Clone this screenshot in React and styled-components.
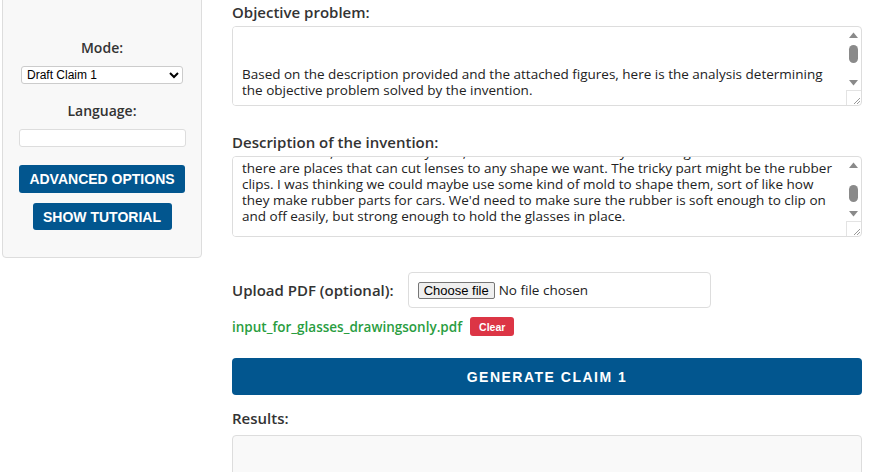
import React, { useEffect, useRef } from 'react';
import styled, { createGlobalStyle } from 'styled-components';

const GlobalStyle = createGlobalStyle`
  html, body {
    margin: 0;
    padding: 0;
    background: #fff;
    overflow: hidden;
  }
  body {
    font-family: 'Open Sans', 'Liberation Sans', sans-serif;
    color: #333;
  }
`;

const Page = styled.div`
  display: flex;
  align-items: flex-start;
  margin-top: -24px;
  padding-left: 2px;
`;

const Sidebar = styled.aside`
  width: 200px;
  box-sizing: border-box;
  background: #f8f8f8;
  border: 1px solid #ddd;
  border-radius: 4px;
  padding: 62px 16px 27px;
  display: flex;
  flex-direction: column;
  align-items: center;
`;

const SideLabel = styled.label`
  font-size: 14px;
  font-weight: 600;
  color: #333;
  line-height: 18px;
  margin-bottom: 9px;
`;

const ModeSelect = styled.select`
  width: 162px;
  height: 18px;
  font-family: 'Liberation Sans', Arial, sans-serif;
  font-size: 12px;
  border: 1px solid #ccc;
  border-radius: 3px;
  background: #fff;
  color: #000;
  padding: 0 1px;
  margin-bottom: 18px;
`;

const LangInput = styled.input`
  width: 167px;
  height: 18px;
  box-sizing: border-box;
  border: 1px solid #ddd;
  border-radius: 3px;
  background: #fff;
  margin-bottom: 18px;
`;

const SideButton = styled.button`
  width: ${({ $w }) => $w}px;
  height: ${({ $h }) => $h}px;
  background: #02568f;
  color: #fff;
  border: none;
  border-radius: 3px;
  font-family: 'Liberation Sans', Arial, sans-serif;
  font-weight: 700;
  font-size: 14px;
  text-transform: uppercase;
  cursor: pointer;
  margin-bottom: 10px;
  &:last-child {
    margin-bottom: 0;
  }
`;

const Main = styled.main`
  width: 630px;
  margin-left: 30px;
  padding-top: 26px;
  display: flex;
  flex-direction: column;
`;

const FieldLabel = styled.label`
  font-size: 15px;
  font-weight: 600;
  color: #333;
  line-height: 20px;
  margin-bottom: 4px;
`;

/* textarea with a drawn scroll rail on its right edge */
const TextBox = styled.div`
  display: flex;
  height: ${({ $h }) => $h}px;
  box-sizing: border-box;
  border: 1px solid #ddd;
  border-radius: 4px;
  overflow: hidden;
  background: #fff;
  margin-bottom: ${({ $mb }) => $mb}px;
`;

const TextArea = styled.textarea`
  flex: 1;
  min-width: 0;
  border: none;
  outline: none;
  resize: none;
  font-family: 'Open Sans', 'Liberation Sans', sans-serif;
  font-size: 13.5px;
  line-height: 16px;
  color: #222;
  padding: 7px 9px 6px;
  white-space: pre;
  overflow: hidden;
`;

const ScrollRail = styled.div`
  width: 15px;
  display: flex;
  flex-direction: column;
  flex-shrink: 0;
`;

const RailButton = styled.div`
  height: 15px;
  display: flex;
  align-items: center;
  justify-content: center;
`;

const RailTrack = styled.div`
  flex: 1;
  padding-top: ${({ $offset }) => $offset}px;
  display: flex;
  flex-direction: column;
  align-items: center;
`;

const Thumb = styled.div`
  width: 9px;
  height: ${({ $size }) => $size}px;
  border-radius: 5px;
  background: #8a8a8a;
`;

const Resizer = styled.div`
  height: 15px;
  box-sizing: border-box;
  border-top: 1px solid #e3e3e3;
  border-left: 1px solid #e3e3e3;
  display: flex;
  align-items: flex-end;
  justify-content: flex-end;
`;

const UploadRow = styled.div`
  display: flex;
  align-items: center;
  gap: 14px;
  margin-bottom: 9px;
`;

const UploadLabel = styled.label`
  font-size: 15px;
  font-weight: 600;
  color: #333;
`;

const FileBox = styled.div`
  width: 303px;
  height: 36px;
  box-sizing: border-box;
  border: 1px solid #ddd;
  border-radius: 4px;
  padding: 0 9px;
  display: flex;
  align-items: center;
  gap: 4px;
`;

const HiddenFile = styled.input`
  display: none;
`;

const ChooseButton = styled.label`
  height: 17px;
  box-sizing: border-box;
  padding: 0 5px;
  display: flex;
  align-items: center;
  background: #efefef;
  border: 1px solid #767676;
  border-radius: 2px;
  font-family: 'Liberation Sans', Arial, sans-serif;
  font-size: 13px;
  color: #000;
  cursor: pointer;
`;

const FileStatus = styled.span`
  font-size: 13.5px;
  color: #222;
`;

const FileRow = styled.div`
  display: flex;
  align-items: center;
  gap: 8px;
  margin-bottom: 22px;
`;

const FileName = styled.span`
  font-size: 13.5px;
  font-weight: 600;
  color: #2a9d3f;
`;

const ClearButton = styled.button`
  height: 19px;
  padding: 0 9px;
  background: #dc3545;
  color: #fff;
  border: none;
  border-radius: 3px;
  font-family: 'Liberation Sans', Arial, sans-serif;
  font-weight: 700;
  font-size: 10.5px;
`;

const GenerateButton = styled.button`
  width: 100%;
  height: 37px;
  background: #02568f;
  color: #fff;
  border: none;
  border-radius: 4px;
  font-family: 'Liberation Sans', Arial, sans-serif;
  font-weight: 700;
  font-size: 14px;
  letter-spacing: 1.5px;
  margin-bottom: 13px;
`;

const ResultsBox = styled.div`
  height: 120px;
  margin-top: 3px;
  background: #f9f9f9;
  border: 1px solid #ddd;
  border-radius: 4px;
`;

const ArrowUp = () => (
  <svg width="9" height="6" viewBox="0 0 9 6">
    <path d="M0 6 L4.5 0.5 L9 6 Z" fill="#8a8a8a" />
  </svg>
);

const ArrowDown = () => (
  <svg width="9" height="6" viewBox="0 0 9 6">
    <path d="M0 0 L4.5 5.5 L9 0 Z" fill="#8a8a8a" />
  </svg>
);

const Grip = () => (
  <svg width="9" height="9" viewBox="0 0 9 9">
    <path d="M8 2 L2 8 M8 5 L5 8" stroke="#9a9a9a" strokeWidth="1" />
  </svg>
);

function ScrollField({ value, height, mb, thumbOffset, thumbSize, areaRef }) {
  return (
    <TextBox $h={height} $mb={mb}>
      <TextArea ref={areaRef} defaultValue={value} />
      <ScrollRail>
        <RailButton>
          <ArrowUp />
        </RailButton>
        <RailTrack $offset={thumbOffset}>
          <Thumb $size={thumbSize} />
        </RailTrack>
        <RailButton>
          <ArrowDown />
        </RailButton>
        <Resizer>
          <Grip />
        </Resizer>
      </ScrollRail>
    </TextBox>
  );
}

const objective = [
  '',
  '',
  'Based on the description provided and the attached figures, here is the analysis determining',
  'the objective problem solved by the invention.',
  '',
  '1. Closest prior art: conventional eyeglass frames with fixed, non-removable lenses.',
  '2. Distinguishing features: interchangeable lenses held by flexible rubber clips.',
  '3. Technical effect: lenses can be swapped quickly without tools.',
  '',
  'Objective problem: how to allow users to exchange lenses easily while keeping them secure.',
].join('\n');

const description = [
  'I want to make glasses where you can swap out the lenses whenever you feel like it, so the',
  'frame stays the same but you can have sunglasses, reading lenses or just plain clear ones.',
  'The frame would have little rubber clips around the edge that hold each lens in place.',
  'I think the frame itself could be plastic, maybe even 3D printed to keep costs down.',
  'For the lenses, I am not totally sure, but from what I found by searching online it seems',
  'there are places that can cut lenses to any shape we want. The tricky part might be the rubber',
  'clips. I was thinking we could maybe use some kind of mold to shape them, sort of like how',
  "they make rubber parts for cars. We'd need to make sure the rubber is soft enough to clip on",
  'and off easily, but strong enough to hold the glasses in place.',
  '',
  'It would also be nice to sell a small case that holds a couple of spare lenses.',
  'Maybe the clips could come in different colours too, so people can match their style.',
  'I have attached some rough drawings showing the frame and where the clips would go.',
].join('\n');

export default function App() {
  const descRef = useRef(null);

  useEffect(() => {
    if (descRef.current) descRef.current.scrollTop = 84;
  }, []);

  return (
    <>
      <GlobalStyle />
      <Page>
        <Sidebar>
          <SideLabel>Mode:</SideLabel>
          <ModeSelect defaultValue="claim1">
            <option value="claim1">Draft Claim 1</option>
            <option value="claims">Draft Dependent Claims</option>
            <option value="desc">Draft Description</option>
          </ModeSelect>
          <SideLabel>Language:</SideLabel>
          <LangInput type="text" />
          <SideButton $w={166} $h={28}>Advanced Options</SideButton>
          <SideButton $w={139} $h={27}>Show Tutorial</SideButton>
        </Sidebar>

        <Main>
          <FieldLabel>Objective problem:</FieldLabel>
          <ScrollField value={objective} height={80} mb={26} thumbOffset={3} thumbSize={18} />

          <FieldLabel>Description of the invention:</FieldLabel>
          <ScrollField
            areaRef={descRef}
            value={description}
            height={81}
            mb={35}
            thumbOffset={13}
            thumbSize={17}
          />

          <UploadRow>
            <UploadLabel>Upload PDF (optional):</UploadLabel>
            <FileBox>
              <ChooseButton htmlFor="pdf-upload">Choose file</ChooseButton>
              <HiddenFile id="pdf-upload" type="file" accept="application/pdf" />
              <FileStatus>No file chosen</FileStatus>
            </FileBox>
          </UploadRow>

          <FileRow>
            <FileName>input_for_glasses_drawingsonly.pdf</FileName>
            <ClearButton>Clear</ClearButton>
          </FileRow>

          <GenerateButton>GENERATE CLAIM 1</GenerateButton>

          <FieldLabel>Results:</FieldLabel>
          <ResultsBox />
        </Main>
      </Page>
    </>
  );
}
